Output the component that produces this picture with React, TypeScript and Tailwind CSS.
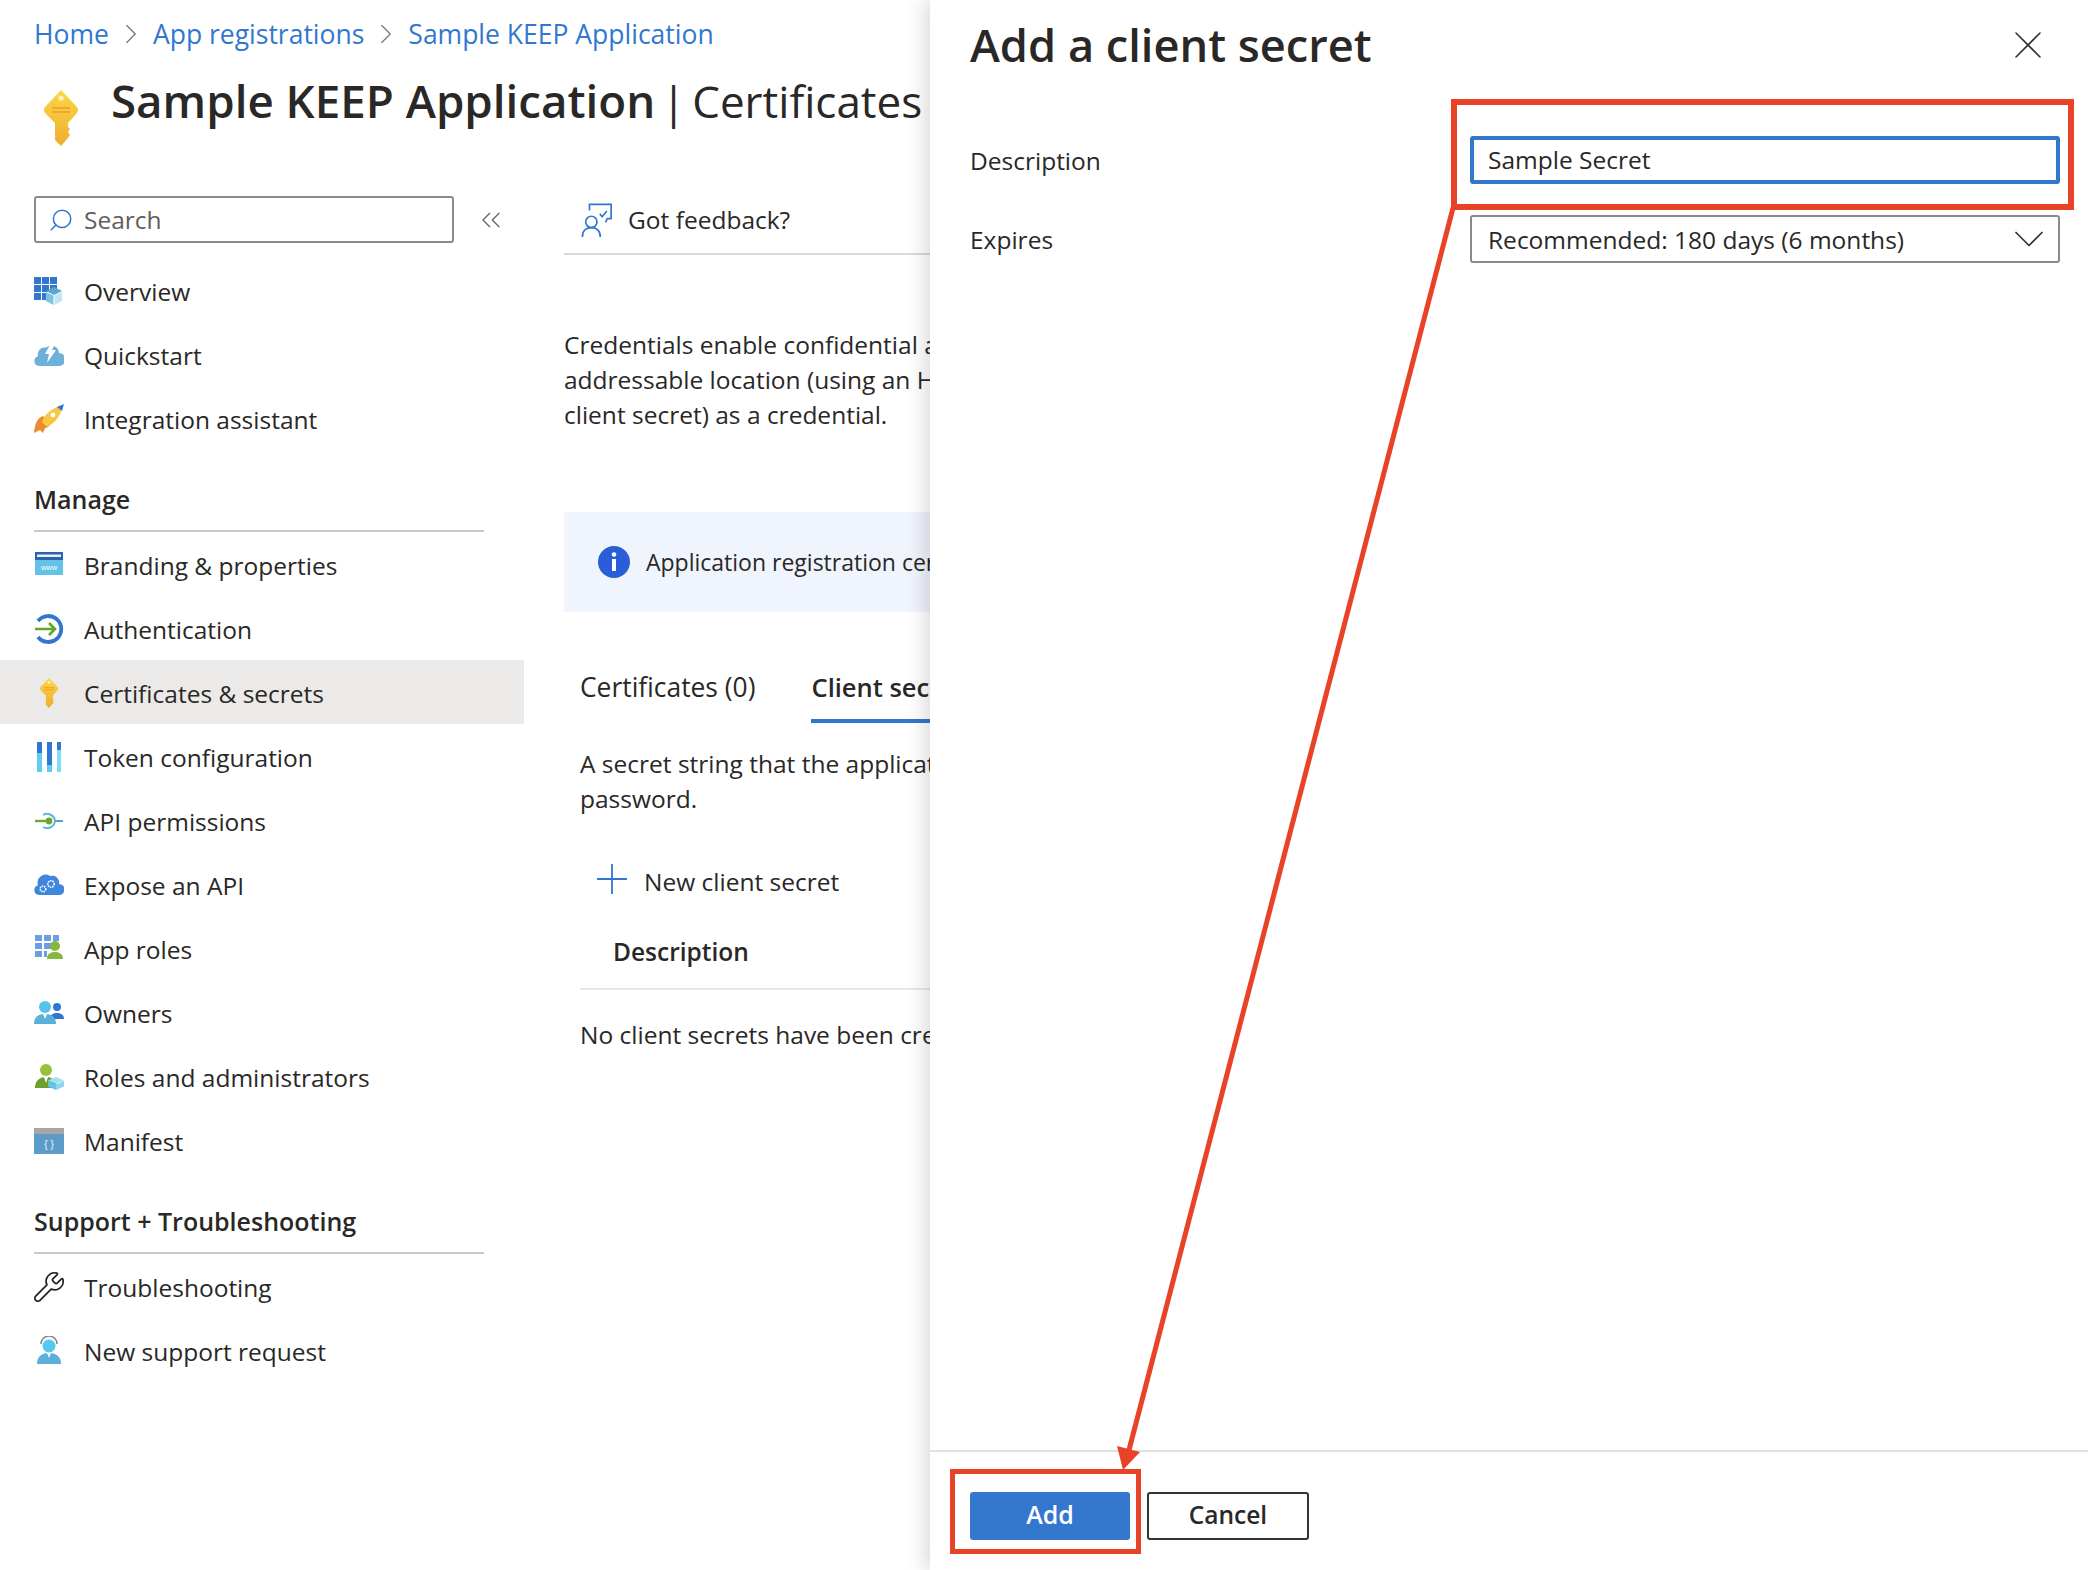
import React from 'react';
import { ChevronRight, ChevronsLeft, Search, Wrench, X, ChevronDown } from 'lucide-react';

const KeyIcon = ({ id, className }: { id: string; className: string }) => (
    <svg viewBox="0 0 36 56" className={className}>
        <defs>
            <linearGradient id={id} x1="0" y1="0" x2="0" y2="1">
                <stop offset="0" stopColor="#fad648" />
                <stop offset="1" stopColor="#f0ae2c" />
            </linearGradient>
        </defs>
        <path d="M18 0 L34 17 Q36 20 34 23 L25 33 V37 L27 39 L25 42 L27 45 L25 48 L18 56 L12 50 V33 L2 23 Q0 20 2 17 Z" fill={`url(#${id})`} />
        <path d="M9 18 H27 M9 22 H27" stroke="#ee9c2c" strokeWidth="1.600" />
        <circle cx="18" cy="8" r="2.600" fill="#fff3c4" />
    </svg>
);

const Overview = () => (
    <svg viewBox="0 0 30 30" className="w-[30px] h-[30px]">
        <path d="M0 1h7v7H0zM8 1h7v7H8zM16 1h7v7h-7zM0 9h7v7H0zM8 9h7v7H8zM16 9h7v4h-7zM0 17h7v7H0zM8 17h4v7H8z" fill="#3277cf" />
        <path d="M20 11l8 4-8 4-8-4z" fill="#5aa6cf" />
        <path d="M12 16l7.500 3.500V29L12 25z" fill="#7fc3e3" />
        <path d="M20.500 19.500L28 16v9l-7.500 4z" fill="#c3e4f3" />
    </svg>
);

const Quickstart = () => (
    <svg viewBox="0 0 30 30" className="w-[30px] h-[30px]">
        <path d="M5 26a5 5 0 0 1-1-9.800A7 7 0 0 1 12 7.500a8 8 0 0 1 13 5.500 6.500 6.500 0 0 1 0 13z" fill="#6eb0d9" />
        <path d="M17 3l-6 11h4l-2 9 9-13h-4l3-6z" fill="#fff" />
    </svg>
);

const Rocket = () => (
    <svg viewBox="0 0 30 30" className="w-[30px] h-[30px]">
        <path d="M0 29c1-9 3-15 9-17l7 8c-1 3-3 4-5 4l-2 5-3-3z" fill="#ec8a2e" />
        <path d="M8 18C10 10 18 5 25 2l3 3c-2 7-7 14-15 18z" fill="#f6c644" />
        <path d="M23 3L30 0l-2 7z" fill="#3277cf" />
        <circle cx="19" cy="11" r="2.400" fill="#fff" />
    </svg>
);

const Branding = () => (
    <svg viewBox="0 0 30 30" className="w-[30px] h-[30px]">
        <rect x="1" y="2" width="28" height="23" fill="#62c2e8" />
        <rect x="1" y="2" width="28" height="8" fill="#2b62ae" />
        <rect x="3" y="4.500" width="24" height="2.500" fill="#e6f2fa" />
        <text x="15" y="20" fontSize="7.500" textAnchor="middle" fill="#fff" fontFamily="Liberation Sans">www</text>
    </svg>
);

const Auth = () => (
    <svg viewBox="0 0 30 30" className="w-[30px] h-[30px]">
        <path d="M4 7A13 13 0 1 1 4 23" fill="none" stroke="#3277cf" strokeWidth="3.800" />
        <path d="M1 15h20M15 9l6 6-6 6" fill="none" stroke="#5fa82e" strokeWidth="2.600" />
    </svg>
);

const Token = () => (
    <svg viewBox="0 0 30 30" className="w-[30px] h-[30px]">
        <rect x="3" y="0" width="5" height="30" fill="#5fcdee" />
        <rect x="3" y="0" width="5" height="11" fill="#3277cf" />
        <rect x="13" y="0" width="5" height="30" fill="#5fcdee" />
        <rect x="13" y="0" width="5" height="23" fill="#3277cf" />
        <rect x="23" y="0" width="4" height="30" fill="#7fdcf5" />
        <rect x="23" y="0" width="4" height="8" fill="#3277cf" />
    </svg>
);

const ApiPerm = () => (
    <svg viewBox="0 0 30 30" className="w-[30px] h-[30px]">
        <path d="M9 9a8 8 0 0 1 12 6 8 8 0 0 1-12 6" fill="none" stroke="#5fb6d9" strokeWidth="2" />
        <path d="M21 15h8" stroke="#5a9fd4" strokeWidth="2" />
        <path d="M1 15h14" stroke="#6aa82e" strokeWidth="2.400" />
        <circle cx="15" cy="15" r="3.400" fill="#6aa82e" />
    </svg>
);

const Gear = ({ x, y, r }: { x: number; y: number; r: number }) => (
    <circle cx={x} cy={y} r={r} fill="none" stroke="#fff" strokeWidth="1.600" strokeDasharray="1.500 0.800" />
);

const ExposeApi = () => (
    <svg viewBox="0 0 30 30" className="w-[30px] h-[30px]">
        <path d="M5 25a5 5 0 0 1-1-9.800A8 8 0 0 1 16 6a7 7 0 0 1 9 8 5.500 5.500 0 0 1 0 11z" fill="#3f86dc" />
        <Gear x={9} y={19} r={2.800} />
        <Gear x={17} y={14} r={3.200} />
    </svg>
);

const AppRoles = () => (
    <svg viewBox="0 0 30 30" className="w-[30px] h-[30px]">
        <path d="M1 1h7v6H1zM10 1h7v6h-7zM19 1h6v6h-6zM1 9h7v6H1zM10 9h7v6h-7zM1 17h7v6H1zM10 17h3v6h-3z" fill="#6b9ee6" />
        <circle cx="21" cy="12" r="5" fill="#86b83e" />
        <path d="M13 25c0-5 3-7 8-7s8 2 8 7z" fill="#86b83e" />
    </svg>
);

const Owners = () => (
    <svg viewBox="0 0 30 30" className="w-[30px] h-[30px]">
        <circle cx="23" cy="9" r="4" fill="#3277cf" />
        <path d="M16 21c0-4 3-6 7-6s7 2 7 6z" fill="#3277cf" />
        <circle cx="11" cy="9" r="6" fill="#55c4ec" />
        <path d="M0 26c0-7 4-10 11-10s11 3 11 10z" fill="#5ab0d6" />
        <path d="M9 16h4l-2 5z" fill="#fff" />
    </svg>
);

const Roles = () => (
    <svg viewBox="0 0 30 30" className="w-[30px] h-[30px]">
        <circle cx="12" cy="8" r="6" fill="#94c23a" />
        <path d="M1 26c0-7 4-11 11-11s11 4 11 11z" fill="#6e9e2e" />
        <path d="M10 15h4l-2 6z" fill="#fff" />
        <path d="M22 15l8 3.500-8 3.500-8-3.500z" fill="#9fe0f5" />
        <path d="M14 19l8 3.500V28l-8-3.500z" fill="#64c4ea" />
        <path d="M30 19l-8 3.500V28l8-3.500z" fill="#8dd7f0" />
    </svg>
);

const Manifest = () => (
    <svg viewBox="0 0 30 30" className="w-[30px] h-[30px]">
        <rect x="0" y="2" width="30" height="26" fill="#5d9cca" />
        <rect x="0" y="2" width="30" height="6" fill="#a6a6a6" />
        <text x="15" y="22" fontSize="10" textAnchor="middle" fill="#e9f3fa" fontFamily="Liberation Sans">{'{ }'}</text>
    </svg>
);

const Support = () => (
    <svg viewBox="0 0 30 30" className="w-[30px] h-[30px]">
        <path d="M7 8a8 8 0 0 1 16 0" fill="none" stroke="#7f7f7f" strokeWidth="1.400" />
        <circle cx="15" cy="10" r="6.500" fill="#55c8f0" />
        <path d="M3 28c0-7 4-11 12-11s12 4 12 11z" fill="#5ab0d6" />
        <path d="M13 17h4l-2 5z" fill="#fff" />
    </svg>
);

const Feedback = () => (
    <svg viewBox="0 0 34 36" className="w-[32px] h-[34px]" fill="none" stroke="#3277cf" strokeWidth="1.800">
        <path d="M9 8V1.500h23v15h-4l-2 4" />
        <path d="M20 11.500l2.500 3 5-6" />
        <circle cx="11" cy="20" r="6" />
        <path d="M1.500 36c0-7 4-10 9.500-10s9.500 3 9.500 10" />
    </svg>
);

const Info = () => (
    <svg viewBox="0 0 32 32" className="w-[32px] h-[32px] shrink-0">
        <circle cx="16" cy="16" r="16" fill="#2a5ed8" />
        <circle cx="16" cy="8.500" r="2.300" fill="#fff" />
        <rect x="14" y="13" width="4" height="12" fill="#fff" />
    </svg>
);

const PlusIcon = () => (
    <svg viewBox="0 0 30 30" className="w-[30px] h-[30px] shrink-0" stroke="#3277cf" strokeWidth="1.800">
        <path d="M15 0v30M0 15h30" />
    </svg>
);

const NavRow = ({ icon, label, active }: { icon: React.ReactNode; label: string; active?: boolean }) => (
    <div className={`flex items-center gap-[20px] h-[64px] pl-[34px] pt-[2px] ${active ? 'bg-[#ebeae8]' : ''}`}>
        <span className="w-[30px] h-[30px] flex items-center justify-center shrink-0">{icon}</span>
        <span>{label}</span>
    </div>
);

const NavSection = ({ label }: { label: string }) => (
    <div className="h-[82px] ml-[34px] w-[450px] flex items-end pb-[13px] border-b-2 border-[#c8c8c8] font-semibold text-[25px]">
        {label}
    </div>
);

const App = () => {
    return (
        <div className="relative w-[2088px] h-[1570px] overflow-hidden bg-white text-[#292827] text-[24.5px] leading-[35px] font-['Open_Sans',sans-serif]">
            <div className="w-[931px] h-full overflow-hidden flex flex-col">
                <div className="h-[70px] pb-[2px] flex items-center pl-[34px] text-[#3277cf] text-[26.5px] whitespace-nowrap">
                    <span>Home</span>
                    <ChevronRight className="w-[34px] h-[34px] mx-[5px] text-[#777]" strokeWidth={0.9} />
                    <span>App registrations</span>
                    <ChevronRight className="w-[34px] h-[34px] mx-[5px] text-[#777]" strokeWidth={0.9} />
                    <span>Sample KEEP Application</span>
                </div>

                <div className="h-[126px] flex items-start pl-[43px] gap-[32px] whitespace-nowrap">
                    <KeyIcon id="titleKey" className="w-[36px] h-[56px] mt-[20px] shrink-0" />
                    <h1 className="text-[44px] leading-[60px] [word-spacing:-5px]">
                        <span className="font-semibold text-[45.7px] [word-spacing:0]">Sample KEEP Application</span> | Certificates
                    </h1>
                </div>

                <div className="flex flex-1 min-h-0">
                    <aside className="w-[524px] shrink-0">
                        <div className="flex items-start h-[62px] pl-[34px]">
                            <div className="w-[420px] h-[47px] flex items-center gap-[10px] pl-[12px] border-2 border-[#8a8a8a] rounded-[3px] text-[#605e5c]">
                                <Search className="w-[26px] h-[26px] text-[#3277cf] -scale-x-100" strokeWidth={1.4} />
                                <span>Search</span>
                            </div>
                            <ChevronsLeft className="w-[32px] h-[32px] ml-[21px] mt-[8px] text-[#666]" strokeWidth={1} />
                        </div>
                        <NavRow icon={<Overview />} label="Overview" />
                        <NavRow icon={<Quickstart />} label="Quickstart" />
                        <NavRow icon={<Rocket />} label="Integration assistant" />
                        <NavSection label="Manage" />
                        <NavRow icon={<Branding />} label="Branding & properties" />
                        <NavRow icon={<Auth />} label="Authentication" />
                        <NavRow icon={<KeyIcon id="navKey" className="w-[20px] h-[30px]" />} label="Certificates & secrets" active />
                        <NavRow icon={<Token />} label="Token configuration" />
                        <NavRow icon={<ApiPerm />} label="API permissions" />
                        <NavRow icon={<ExposeApi />} label="Expose an API" />
                        <NavRow icon={<AppRoles />} label="App roles" />
                        <NavRow icon={<Owners />} label="Owners" />
                        <NavRow icon={<Roles />} label="Roles and administrators" />
                        <NavRow icon={<Manifest />} label="Manifest" />
                        <NavSection label="Support + Troubleshooting" />
                        <NavRow icon={<Wrench className="w-[34px] h-[34px] shrink-0 text-[#222]" strokeWidth={1.2} />} label="Troubleshooting" />
                        <NavRow icon={<Support />} label="New support request" />
                    </aside>

                    <main className="flex-1 min-w-0 pl-[40px] whitespace-nowrap">
                        <div className="h-[59px] pb-[10px] flex items-center gap-[15px] pl-[17px] border-b-2 border-[#d9d9d9]">
                            <Feedback />
                            <span>Got feedback?</span>
                        </div>

                        <p className="mt-[72px]">
                            Credentials enable confidential applications<br />
                            addressable location (using an HTTPS scheme)<br />
                            client secret) as a credential.
                        </p>

                        <div className="mt-[80px] h-[100px] flex items-center gap-[16px] pl-[34px] bg-[#f0f4fc] rounded-[2px] text-[23px]">
                            <Info />
                            <span>Application registration certificates</span>
                        </div>

                        <div className="mt-[48px] h-[63px] flex gap-[56px] pl-[16px] text-[26.4px]">
                            <div className="pt-[10px]">Certificates (0)</div>
                            <div className="pt-[10px] font-semibold border-b-4 border-[#3277cf] w-[300px] text-[25.5px]">Client secrets (0)</div>
                        </div>

                        <p className="mt-[23px] pl-[16px]">
                            A secret string that the application uses<br />
                            password.
                        </p>

                        <div className="mt-[33px] h-[60px] flex items-center gap-[17px] pl-[33px]">
                            <PlusIcon />
                            <span className="pt-[4px]">New client secret</span>
                        </div>

                        <div className="ml-[16px] h-[81px] pl-[33px] pt-[25px] border-b-2 border-[#e8e8e8] font-semibold">Description</div>

                        <p className="mt-[27px] pl-[16px]">No client secrets have been created</p>
                    </main>
                </div>
            </div>

            <div className="absolute left-[930px] top-0 right-0 bottom-0 bg-white flex flex-col shadow-[-6px_0_18px_rgba(0,0,0,0.14)]">
                <div className="h-[90px] flex items-center justify-between pl-[40px] pr-[36px]">
                    <h2 className="text-[45.2px] leading-[60px] font-semibold">Add a client secret</h2>
                    <X className="w-[48px] h-[48px] text-[#333]" strokeWidth={0.8} />
                </div>

                <div className="grid grid-cols-[500px_590px] gap-y-[31px] pl-[40px] pt-[46px] items-center">
                    <label>Description</label>
                    <div className="h-[48px] flex items-center pl-[14px] pb-[1px] border-4 border-[#3277cf] rounded-[3px]">Sample Secret</div>
                    <label>Expires</label>
                    <div className="h-[48px] flex items-center justify-between pl-[16px] pr-[3px] border-2 border-[#8a8a8a] rounded-[3px]">
                        <span>Recommended: 180 days (6 months)</span>
                        <ChevronDown className="w-[52px] h-[52px] shrink-0 text-[#333]" strokeWidth={0.8} />
                    </div>
                </div>

                <div className="mt-auto h-[120px] border-t-2 border-[#e1e1e1] flex gap-[17px] pl-[40px] pt-[40px] font-semibold">
                    <button className="w-[160px] h-[48px] pb-[3px] bg-[#3477cf] rounded-[3px] text-white text-[25px]">Add</button>
                    <button className="w-[162px] h-[48px] pb-[3px] border-2 border-[#333] rounded-[3px]">Cancel</button>
                </div>
            </div>

            {/* red annotations drawn over the screenshot */}
            <svg className="absolute left-0 top-0 w-[2088px] h-[1570px] pointer-events-none" viewBox="0 0 2088 1570">
                <rect x="1454" y="102" width="617" height="105" fill="none" stroke="#e94327" strokeWidth="6" />
                <rect x="952.500" y="1471.500" width="186" height="80" fill="none" stroke="#e94327" strokeWidth="5" />
                <line x1="1453" y1="208" x2="1129" y2="1450" stroke="#e94327" strokeWidth="5" />
                <polygon points="1117,1446 1140,1452 1123,1470" fill="#e94327" />
            </svg>
        </div>
    );
};

export default App;
